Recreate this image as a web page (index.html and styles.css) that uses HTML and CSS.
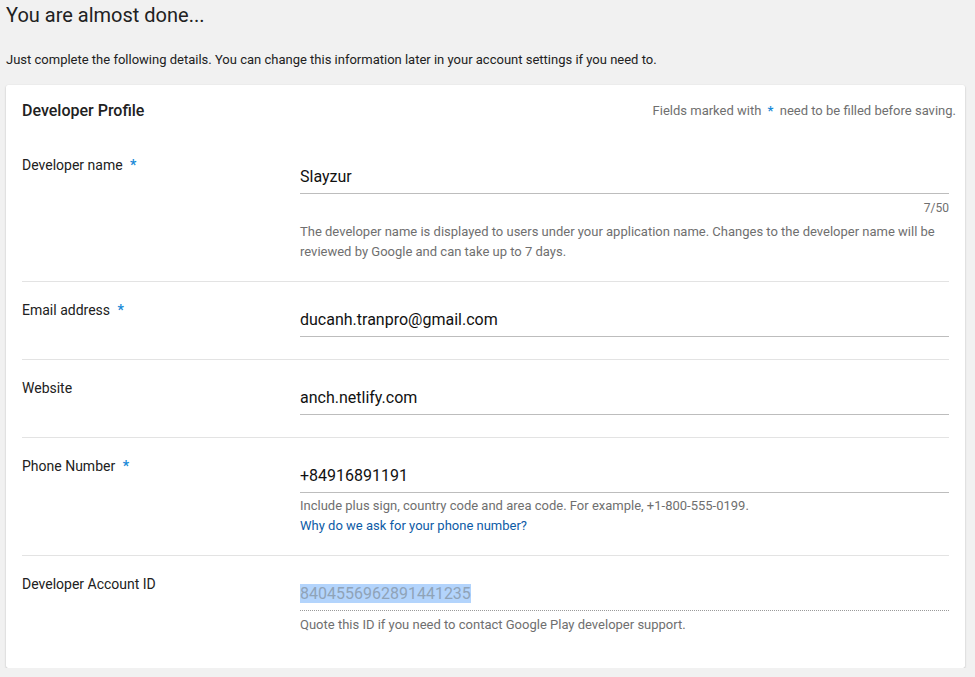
FILE: index.html
```html
<!DOCTYPE html>
<html lang="en">
<head>
<meta charset="utf-8">
<title>You are almost done...</title>
<link rel="stylesheet" href="styles.css">
</head>
<body>
<div class="page">
  <h1 class="title">You are almost done...</h1>
  <p class="intro">Just complete the following details. You can change this information later in your account settings if you need to.</p>
  <section class="card">
    <header class="card-head">
      <h2 class="card-title">Developer Profile</h2>
      <span class="note">Fields marked with <span class="req">*</span> need to be filled before saving.</span>
    </header>

    <div class="row row-first">
      <div class="label">Developer name <span class="req">*</span></div>
      <div class="field">
        <div class="input input-first">Slayzur</div>
        <div class="counter">7/50</div>
        <p class="help help-first">The developer name is displayed to users under your application name. Changes to the developer name will be reviewed by Google and can take up to 7 days.</p>
      </div>
    </div>

    <div class="row">
      <div class="label">Email address <span class="req">*</span></div>
      <div class="field">
        <div class="input">ducanh.tranpro@gmail.com</div>
      </div>
    </div>

    <div class="row">
      <div class="label">Website</div>
      <div class="field">
        <div class="input">anch.netlify.com</div>
      </div>
    </div>

    <div class="row row-help">
      <div class="label">Phone Number <span class="req">*</span></div>
      <div class="field">
        <div class="input">+84916891191</div>
        <p class="help">Include plus sign, country code and area code. For example, +1-800-555-0199.<br><a class="link" href="#">Why do we ask for your phone number?</a></p>
      </div>
    </div>

    <div class="row row-last">
      <div class="label">Developer Account ID</div>
      <div class="field">
        <div class="readonly"><span class="selected">8404556962891441235</span></div>
        <p class="help help-id">Quote this ID if you need to contact Google Play developer support.</p>
      </div>
    </div>
  </section>
</div>
</body>
</html>
```

FILE: styles.css
```css
* { box-sizing: border-box; }

html, body {
  margin: 0;
  padding: 0;
  background: #f1f1f1;
  font-family: Roboto, "Liberation Sans", Arial, sans-serif;
  color: #212121;
}

.page {
  padding: 3px 10px 0 6px;
}

.title {
  margin: 0;
  font-size: 20px;
  line-height: 24px;
  font-weight: 400;
  color: #212121;
}

.intro {
  margin: 24px 0 0;
  font-size: 13px;
  line-height: 18px;
  color: #212121;
}

.card {
  margin-top: 16px;
  background: #fff;
  border-radius: 2px;
  box-shadow: 0 1px 2px rgba(0, 0, 0, 0.22), 0 0 1px rgba(0, 0, 0, 0.08);
  padding: 16px 16px 14px;
}

.card-head {
  display: flex;
  justify-content: space-between;
  align-items: center;
  padding-bottom: 15px;
  margin-right: -7px;
}

.card-title {
  margin: 0;
  font-size: 16px;
  line-height: 20px;
  font-weight: 500;
  color: #212121;
}

.note {
  font-size: 13px;
  line-height: 20px;
  color: #6f6f6f;
}

.req {
  color: #1a8ad8;
  font-weight: 700;
  margin-left: 3px;
  margin-right: 3px;
}

.row {
  display: grid;
  grid-template-columns: 278px 1fr;
  padding: 18px 0 22px;
  border-top: 1px solid #e3e3e3;
}

.row-first {
  border-top: 0;
  padding-top: 19px;
  padding-bottom: 19px;
}

.row-help {
  padding-bottom: 19px;
}

.row-last {
  padding-bottom: 19px;
}

.label {
  font-size: 14px;
  line-height: 20px;
  color: #212121;
}

.label .req {
  margin-left: 4px;
}

.field {
  padding-top: 7px;
  min-width: 0;
}

.row-first .field {
  padding-top: 6px;
}

.input {
  font-size: 16px;
  line-height: 24px;
  padding: 1px 0 4px;
  color: #111;
  border-bottom: 1px solid #bdbdbd;
}

.input-first {
  margin-top: 3px;
}

.counter {
  margin-top: 6px;
  font-size: 12px;
  line-height: 16px;
  text-align: right;
  color: #6f6f6f;
}

.help {
  margin: 3px 0 0;
  font-size: 13px;
  line-height: 20px;
  color: #6f6f6f;
}

.help-first {
  margin-top: 6px;
}

.help-id {
  margin-top: 4px;
}

.link {
  color: #0d5ba6;
  text-decoration: none;
}

.readonly {
  font-size: 16px;
  line-height: 24px;
  padding: 1px 0 4px;
  border-bottom: 1px dotted #9a9a9a;
}

.selected {
  background: #b3d4fc;
  color: #8fa3b8;
}
```
